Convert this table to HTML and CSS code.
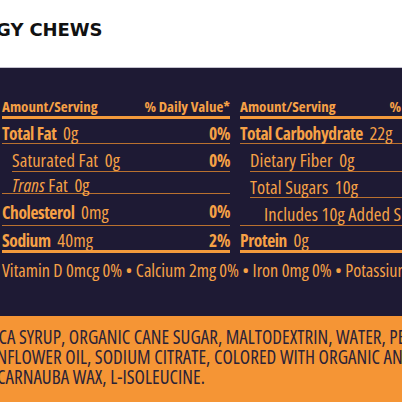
FILE: index.html
```html
<!DOCTYPE html>
<html lang="en">

<head>
    <meta charset="UTF-8">
    <meta name="viewport" content="width=device-width, initial-scale=1.0">
    <title>Energy Chews</title>
    <link rel="stylesheet" href="styles.css">
</head>

<body>
    <header class="top">
        <h1 class="title">ENERGY CHEWS</h1>
    </header>

    <section class="panel">
        <div class="facts">
            <div class="col col-left">
                <div class="head">
                    <span>Amount/Serving</span>
                    <span>% Daily Value*</span>
                </div>
                <div class="row h25">
                    <span><b>Total Fat</b> <span class="amt">0g</span></span>
                    <b>0%</b>
                </div>
                <div class="row h28 sub line-sub">
                    <span>Saturated Fat <span class="amt">0g</span></span>
                    <b>0%</b>
                </div>
                <div class="row h22 sub">
                    <span><i>Trans</i> Fat <span class="amt">0g</span></span>
                </div>
                <div class="row h32">
                    <span><b>Cholesterol</b> <span class="amt">0mg</span></span>
                    <b>0%</b>
                </div>
                <div class="row h24 last">
                    <span><b>Sodium</b> <span class="amt">40mg</span></span>
                    <b>2%</b>
                </div>
            </div>

            <div class="col col-right">
                <div class="head">
                    <span>Amount/Serving</span>
                    <span>% Daily Value*</span>
                </div>
                <div class="row h25">
                    <span><b>Total Carbohydrate</b> <span class="amt">22g</span></span>
                    <b>8%</b>
                </div>
                <div class="row h28 sub line-sub">
                    <span>Dietary Fiber <span class="amt">0g</span></span>
                    <b>0%</b>
                </div>
                <div class="row h26 sub line-sub">
                    <span>Total Sugars <span class="amt">10g</span></span>
                </div>
                <div class="row h28 subsub">
                    <span>Includes 10g Added Sugars</span>
                    <b>20%</b>
                </div>
                <div class="row h24 last">
                    <span><b>Protein</b> <span class="amt">0g</span></span>
                </div>
            </div>
        </div>

        <p class="vitamins">Vitamin D 0mcg 0% &bull; Calcium 2mg 0% &bull; Iron 0mg 0% &bull; Potassium 0mg 0%</p>
    </section>

    <section class="ingredients">
        <div class="lines">
            <div class="line-1">INGREDIENTS: ORGANIC TAPIOCA SYRUP, ORGANIC CANE SUGAR, MALTODEXTRIN, WATER, PECTIN,</div>
            <div class="line-2">CITRIC ACID, SEA SALT, SUNFLOWER OIL, SODIUM CITRATE, COLORED WITH ORGANIC ANNATTO,</div>
            <div>CARNAUBA WAX, L-ISOLEUCINE.</div>
        </div>
    </section>
</body>

</html>
```

FILE: styles.css
```css
html,
body {
    margin: 0;
    overflow: hidden;
}

body {
    width: 402px;
    background: #fff;
    font-family: "Open Sans", "DejaVu Sans", sans-serif;
    font-stretch: 75%;
    color: #f6a146;
}

.top {
    height: 67px;
    display: flex;
    align-items: center;
    padding-bottom: 8px;
    box-sizing: border-box;
    overflow: hidden;
}

.title {
    margin: 0 0 0 -57px;
    font-family: "DejaVu Sans", sans-serif;
    font-stretch: 100%;
    font-weight: 700;
    font-size: 18px;
    letter-spacing: -0.1px;
    color: #111;
    white-space: nowrap;
}

.panel {
    height: 249px;
    box-sizing: border-box;
    background: #1e1a34;
    border-top: 1px solid #c4c2cf;
    padding-top: 29px;
    overflow: hidden;
}

.facts {
    display: flex;
    gap: 10px;
    padding-left: 2px;
}

.col {
    flex: none;
    border-bottom: 3px solid #f39a3c;
}

.col-left {
    width: 228px;
}

.col-right {
    width: 235px;
}

.head {
    display: flex;
    justify-content: space-between;
    height: 19px;
    line-height: 19px;
    font-weight: 700;
    font-size: 15px;
    border-bottom: 3px solid #f39a3c;
}

.row {
    display: flex;
    justify-content: space-between;
    align-items: center;
    box-sizing: border-box;
    padding-top: 3px;
    font-size: 18.5px;
    letter-spacing: 0.1px;
    white-space: nowrap;
    border-bottom: 1px solid #b9712f;
}

.row b {
    font-size: 17.5px;
    letter-spacing: -0.4px;
}

.amt {
    margin-left: 3px;
}

.row.last {
    border-bottom: none;
}

.sub {
    padding-left: 10px;
}

.subsub {
    padding-left: 24px;
}

/* the rule under a sub row that is followed by another sub row starts indented */
.line-sub {
    border-bottom: none;
    background: linear-gradient(#b9712f, #b9712f) 10px 100% / calc(100% - 10px) 1px no-repeat;
}

.h22 { height: 22px; }
.h24 { height: 24px; }
.h25 { height: 25px; }
.h26 { height: 26px; }
.h28 { height: 28px; }
.h32 { height: 32px; }

.vitamins {
    margin: 7px 0 0 2px;
    line-height: 20px;
    font-size: 18.2px;
    white-space: nowrap;
}

.ingredients {
    height: 86px;
    background: #f59535;
    padding-top: 11px;
    box-sizing: border-box;
    overflow: hidden;
}

/* centred lines, as on the printed pack; only the middle of each is in view */
.lines {
    width: 202px;
    display: flex;
    flex-direction: column;
    align-items: center;
    font-size: 19px;
    line-height: 20px;
    letter-spacing: 0.05px;
    color: #2a2238;
}

.lines div {
    white-space: nowrap;
}

.line-1 {
    padding-left: 36px;
}

.line-2 {
    padding-left: 78px;
}
```
